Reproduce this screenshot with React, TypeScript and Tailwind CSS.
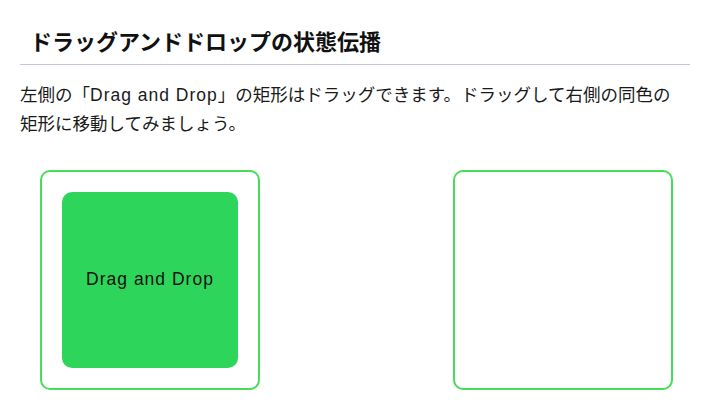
export default function App() {
  const latin = "font-['Liberation_Sans','Noto_Sans_CJK_JP',sans-serif] tracking-[1px]";
  return (
    <div
      className="w-[720px] h-[404px] bg-white text-[#1a1a1a] overflow-hidden"
      style={{ fontFamily: '"Noto Sans CJK JP", "Noto Sans", sans-serif' }}
    >
      <div className="ml-[20px] w-[670px] border-b border-[#c4c4da] pt-[25px] pb-[9px] pl-[10px]">
        <h2 className="text-[22px] font-bold leading-[30px] text-[#111]">ドラッグアンドドロップの状態伝播</h2>
      </div>
      <p className="mt-[15px] px-[20px] text-[17.5px] leading-[27px] text-[#1a1a1a] whitespace-nowrap">
        左側の「<span className={latin}>Drag and Drop</span>」の矩形はドラッグできます。ドラッグして右側の同色の
        <br />
        矩形に移動してみましょう。
      </p>
      <div className="mt-[34px] ml-[40px] flex gap-[193px]">
        <div className="w-[220px] h-[220px] border-2 border-[#48dc5a] rounded-[10px] p-[20px]">
          <div className="w-full h-full bg-[#2dd65b] rounded-[10px] flex items-center justify-center pb-[2px] text-[17.5px] text-[#111]">
            <span className={latin}>Drag and Drop</span>
          </div>
        </div>
        <div className="w-[220px] h-[220px] border-2 border-[#48dc5a] rounded-[10px]" />
      </div>
    </div>
  );
}
